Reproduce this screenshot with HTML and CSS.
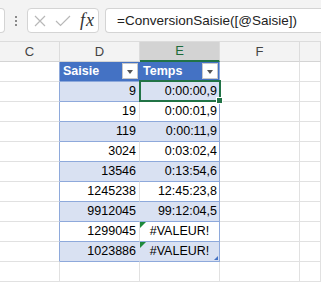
FILE: index.html
```html
<!DOCTYPE html>
<html lang="fr">
<head>
  <meta charset="UTF-8" />
  <title>ConversionSaisie</title>
  <link rel="stylesheet" href="styles.css">
</head>
<body>

  <div class="formula-bar">
    <div class="name-box"></div>
    <div class="grip"><span></span><span></span><span></span></div>
    <div class="fx-box">
      <svg class="icon-x" width="12" height="12" viewBox="0 0 12 12">
        <path d="M1 1 L11 11 M11 1 L1 11" stroke="#b8b8b8" stroke-width="1.2" fill="none"/>
      </svg>
      <svg class="icon-check" width="16" height="12" viewBox="0 0 16 12">
        <path d="M1 6 L5.5 10.5 L15 1" stroke="#b8b8b8" stroke-width="1.2" fill="none"/>
      </svg>
      <span class="fx">fx</span>
    </div>
    <div class="formula">=ConversionSaisie([@Saisie])</div>
  </div>

  <div class="sheet">
    <div class="cell head">C</div>
    <div class="cell head">D</div>
    <div class="cell head active">E</div>
    <div class="cell head">F</div>
    <div class="cell head"></div>

    <div class="cell edge"></div>
    <div class="cell th">Saisie<span class="filter"></span></div>
    <div class="cell th th-last">Temps<span class="filter"></span></div>
    <div class="cell"></div>
    <div class="cell"></div>

    <div class="cell edge"></div>
    <div class="cell num band">9</div>
    <div class="cell time band selected">0:00:00,9</div>
    <div class="cell"></div>
    <div class="cell"></div>

    <div class="cell edge"></div>
    <div class="cell num">19</div>
    <div class="cell time">0:00:01,9</div>
    <div class="cell"></div>
    <div class="cell"></div>

    <div class="cell edge"></div>
    <div class="cell num band">119</div>
    <div class="cell time band">0:00:11,9</div>
    <div class="cell"></div>
    <div class="cell"></div>

    <div class="cell edge"></div>
    <div class="cell num">3024</div>
    <div class="cell time">0:03:02,4</div>
    <div class="cell"></div>
    <div class="cell"></div>

    <div class="cell edge"></div>
    <div class="cell num band">13546</div>
    <div class="cell time band">0:13:54,6</div>
    <div class="cell"></div>
    <div class="cell"></div>

    <div class="cell edge"></div>
    <div class="cell num">1245238</div>
    <div class="cell time">12:45:23,8</div>
    <div class="cell"></div>
    <div class="cell"></div>

    <div class="cell edge"></div>
    <div class="cell num band">9912045</div>
    <div class="cell time band">99:12:04,5</div>
    <div class="cell"></div>
    <div class="cell"></div>

    <div class="cell edge"></div>
    <div class="cell num">1299045</div>
    <div class="cell time error">#VALEUR!</div>
    <div class="cell"></div>
    <div class="cell"></div>

    <div class="cell edge"></div>
    <div class="cell num band">1023886</div>
    <div class="cell time band error last">#VALEUR!</div>
    <div class="cell"></div>
    <div class="cell"></div>

    <div class="cell"></div>
    <div class="cell"></div>
    <div class="cell"></div>
    <div class="cell"></div>
    <div class="cell"></div>
  </div>

</body>
</html>
```

FILE: styles.css
```css
body {
  margin: 0;
  width: 321px;
  height: 294px;
  overflow: hidden;
  background: #fff;
  font-family: "Liberation Sans", Arial, sans-serif;
}

/* formula bar */
.formula-bar {
  display: flex;
  align-items: center;
  height: 42px;
  box-sizing: border-box;
  padding-bottom: 1px;
  background: #f3f3f3;
  border-bottom: 1px solid #dcdcdc;
}

.name-box,
.fx-box,
.formula {
  height: 25px;
  box-sizing: border-box;
  background: #fff;
  border: 1px solid #d4d4d4;
  border-radius: 4px;
}

.name-box {
  width: 5px;
  border-left: none;
  border-radius: 0 4px 4px 0;
}

.grip {
  display: flex;
  flex-direction: column;
  gap: 2px;
  margin: 1px 10px 0 10px;
}

.grip span {
  width: 2px;
  height: 2px;
  background: #8a8a8a;
}

.fx-box {
  display: flex;
  align-items: center;
  width: 72px;
  padding-left: 6px;
}

.icon-x {
  margin-top: 1px;
}

.icon-check {
  margin: 1px 0 0 9px;
}

.fx {
  margin-left: 9px;
  font-family: "Liberation Serif", serif;
  font-style: italic;
  font-size: 18px;
  color: #333;
  letter-spacing: 1px;
}

.formula {
  flex: 1;
  margin-left: 6px;
  padding-left: 11px;
  border-right: none;
  border-radius: 4px 0 0 4px;
  font-size: 13.5px;
  line-height: 23px;
  color: #222;
  white-space: nowrap;
}

/* grid */
.sheet {
  display: grid;
  grid-template-columns: 60px 80px 80px 80px 21px;
  grid-auto-rows: 20px;
}

.cell {
  position: relative;
  box-sizing: border-box;
  border-right: 1px solid #e1e1e1;
  border-bottom: 1px solid #e1e1e1;
  font-size: 12.5px;
  line-height: 19px;
  color: #000;
  white-space: nowrap;
}

.head {
  background: #f3f3f3;
  border-right-color: #dcdcdc;
  border-bottom-color: #d4d4d4;
  text-align: center;
  font-size: 13px;
  color: #444;
}

.head.active {
  background: #d3d3d3;
  border-bottom: 2px solid #217346;
  line-height: 18px;
  color: #1d6b3a;
}

.edge {
  border-right-color: #8ea9db;
}

.th {
  background: #4472c4;
  border-right-color: #4472c4;
  border-bottom-color: #8ea9db;
  padding-left: 3px;
  color: #fff;
  font-weight: bold;
}

.th-last {
  border-right-color: #8ea9db;
}

.filter {
  position: absolute;
  top: 1px;
  right: 1px;
  width: 16px;
  height: 16px;
  box-sizing: border-box;
  background: #fff;
  border: 1px solid #c8c8c8;
}

.filter::after {
  content: "";
  position: absolute;
  left: 4px;
  top: 6px;
  border-left: 3.5px solid transparent;
  border-right: 3.5px solid transparent;
  border-top: 4px solid #555;
}

.num,
.time {
  text-align: right;
  border-bottom-color: #8ea9db;
}

.num {
  padding-right: 3px;
}

.time {
  padding-right: 2px;
  border-right-color: #8ea9db;
}

.band {
  background: #d9e1f2;
}

.num.band {
  border-right-color: transparent;
}

.error {
  text-align: center;
  padding-left: 2px;
}

.error::before {
  content: "";
  position: absolute;
  left: 0;
  top: 0;
  border-top: 6px solid #1e8a3c;
  border-right: 6px solid transparent;
}

.last::after {
  content: "";
  position: absolute;
  right: 1px;
  bottom: 1px;
  border-bottom: 4px solid #4472c4;
  border-left: 4px solid transparent;
}

.selected::after {
  content: "";
  position: absolute;
  top: -2px;
  left: -1px;
  right: -2px;
  bottom: -1px;
  border: 2px solid #217346;
  z-index: 1;
}

.selected::before {
  content: "";
  position: absolute;
  right: -4px;
  bottom: -3px;
  width: 5px;
  height: 5px;
  background: #217346;
  border: 1px solid #fff;
  z-index: 2;
}
```
